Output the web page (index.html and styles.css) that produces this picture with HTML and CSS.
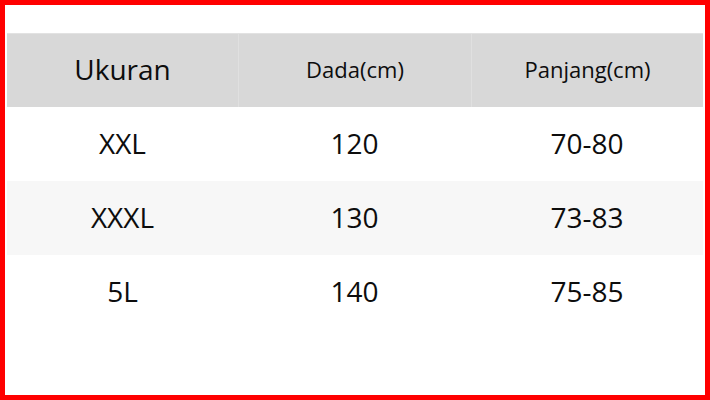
FILE: index.html
```html
<!DOCTYPE html>
<html>
<head>
<meta charset="utf-8">
<link rel="stylesheet" href="styles.css">
</head>
<body>
<div class="frame">
  <div class="table">
    <div class="row head">
      <div class="cell main">Ukuran</div>
      <div class="cell sub">Dada(cm)</div>
      <div class="cell sub">Panjang(cm)</div>
    </div>
    <div class="row">
      <div class="cell">XXL</div>
      <div class="cell">120</div>
      <div class="cell">70-80</div>
    </div>
    <div class="row alt">
      <div class="cell">XXXL</div>
      <div class="cell">130</div>
      <div class="cell">73-83</div>
    </div>
    <div class="row">
      <div class="cell">5L</div>
      <div class="cell">140</div>
      <div class="cell">75-85</div>
    </div>
  </div>
</div>
</body>
</html>
```

FILE: styles.css
```css
html, body {
  margin: 0;
  padding: 0;
  background: #fff;
}
.frame {
  width: 710px;
  height: 400px;
  box-sizing: border-box;
  border: 5px solid #ff0000;
  padding: 28px 2px 0 2px;
  font-family: "Open Sans", "Noto Sans", sans-serif;
  color: #0d0d0d;
}
.table {
  display: flex;
  flex-direction: column;
}
.row {
  display: grid;
  grid-template-columns: 231px 233px 232px;
  height: 74px;
  background: #fff;
}
.row.alt {
  background: #f7f7f7;
}
.row.head {
  background: #d8d8d8;
  border-top: 1px solid #e2e2e2;
  box-sizing: border-box;
}
.cell {
  display: flex;
  align-items: center;
  justify-content: center;
  font-size: 28px;
  padding-bottom: 2px;
}
.head .cell {
  padding-bottom: 4px;
}
.head .cell + .cell {
  border-left: 1px solid #e0e0e0;
}
.head .sub {
  font-size: 22px;
}
.head .main {
  font-size: 28px;
}
```
